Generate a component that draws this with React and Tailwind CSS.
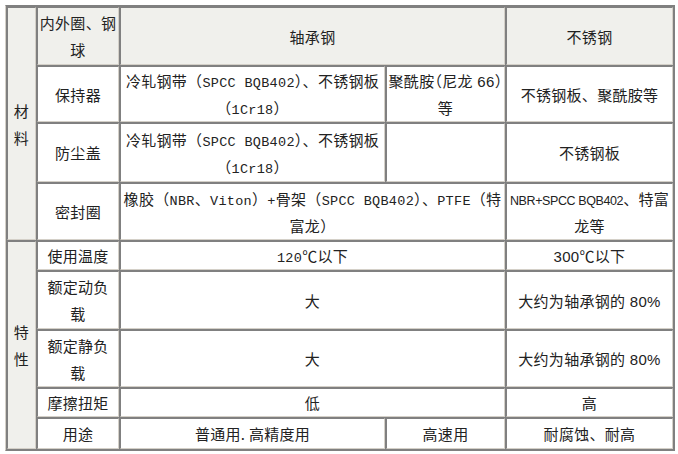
const cell =
  "border border-t-[#808080] border-l-[#808080] border-b-[#d4d0c8] border-r-[#d4d0c8] p-0 text-center align-middle whitespace-nowrap";
const gray = cell + " bg-[#f0f0ec]";
const white = cell + " bg-white";
const mono = "font-['Liberation_Mono',monospace] text-[13.5px] leading-none";
const sans = "font-['Liberation_Sans',sans-serif] leading-none";
const narrow = "font-['Liberation_Sans',sans-serif] text-[12.5px] tracking-[-0.4px] leading-none";

export default function App() {
  return (
    <div className="w-[678px] h-[454px] bg-white pl-[5px] pt-[5px] font-['Noto_Sans_CJK_SC',sans-serif] text-[15px] leading-[27px] tracking-[0.3px] text-[#222]">
      <table className="table-fixed w-[670px] border-separate border-spacing-[1px] bg-[#808080] border border-[#808080] border-l-[#d4d0c8]">
        <colgroup>
          <col className="w-[29px]" />
          <col className="w-[82px]" />
          <col className="w-[265px]" />
          <col className="w-[119px]" />
          <col className="w-[167px]" />
        </colgroup>
        <tbody>
          <tr className="h-[58px]">
            <td rowSpan={4} className={gray}>
              材<br />料
            </td>
            <td className={gray}>
              内外圈、钢<br />球
            </td>
            <td colSpan={2} className={gray}>
              轴承钢
            </td>
            <td className={gray}>不锈钢</td>
          </tr>
          <tr className="h-[56px]">
            <td className={white}>保持器</td>
            <td className={white}>
              冷轧钢带（<span className={mono}>SPCC BQB402</span>）、不锈钢板
              <br />（<span className={mono}>1Cr18</span>）
            </td>
            <td className={white + " [font-feature-settings:'halt']"}>
              聚酰胺（尼龙<span className={sans}> 66</span>）<br />等
            </td>
            <td className={white}>不锈钢板、聚酰胺等</td>
          </tr>
          <tr className="h-[59px]">
            <td className={white}>防尘盖</td>
            <td className={white}>
              冷轧钢带（<span className={mono}>SPCC BQB402</span>）、不锈钢板
              <br />（<span className={mono}>1Cr18</span>）
            </td>
            <td className={white}></td>
            <td className={white}>不锈钢板</td>
          </tr>
          <tr className="h-[57px]">
            <td className={white}>密封圈</td>
            <td colSpan={2} className={white}>
              橡胶（<span className={mono}>NBR</span>、<span className={mono}>Viton</span>）
              <span className={mono}>+</span>骨架（<span className={mono}>SPCC BQB402</span>）、
              <span className={mono}>PTFE</span>（特<br />富龙）
            </td>
            <td className={white}>
              <span className={narrow}>NBR+SPCC BQB402</span>、特富<br />龙等
            </td>
          </tr>
          <tr className="h-[29px]">
            <td rowSpan={5} className={gray}>
              特<br />性
            </td>
            <td className={white}>使用温度</td>
            <td colSpan={2} className={white}>
              <span className={mono}>120</span>℃以下
            </td>
            <td className={white}>
              <span className={sans}>300</span>℃以下
            </td>
          </tr>
          <tr className="h-[58px]">
            <td className={white}>
              额定动负<br />载
            </td>
            <td colSpan={2} className={white}>
              大
            </td>
            <td className={white}>
              大约为轴承钢的<span className={sans}> 80%</span>
            </td>
          </tr>
          <tr className="h-[57px]">
            <td className={white}>
              额定静负<br />载
            </td>
            <td colSpan={2} className={white}>
              大
            </td>
            <td className={white}>
              大约为轴承钢的<span className={sans}> 80%</span>
            </td>
          </tr>
          <tr className="h-[29px]">
            <td className={white}>摩擦扭矩</td>
            <td colSpan={2} className={white}>
              低
            </td>
            <td className={white}>高</td>
          </tr>
          <tr className="h-[31px]">
            <td className={white}>用途</td>
            <td className={white}>普通用. 高精度用</td>
            <td className={white}>高速用</td>
            <td className={white}>耐腐蚀、耐高</td>
          </tr>
        </tbody>
      </table>
    </div>
  );
}
